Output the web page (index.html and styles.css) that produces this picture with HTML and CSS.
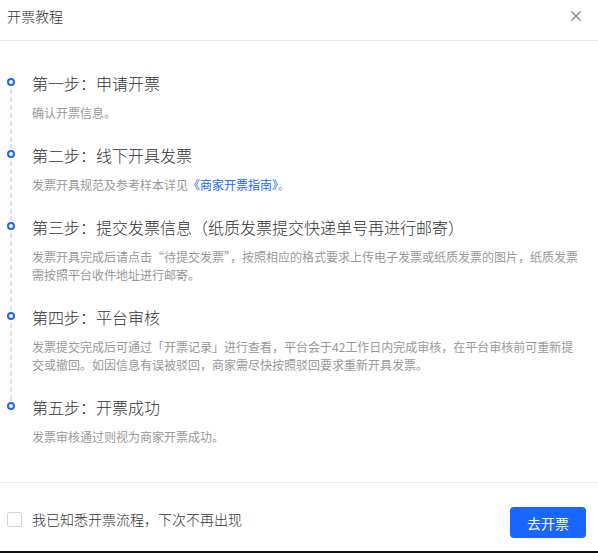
FILE: index.html
```html
<!DOCTYPE html>
<html lang="zh-CN">
<head>
    <meta charset="UTF-8">
    <meta name="viewport" content="width=device-width, initial-scale=1.0">
    <title>开票教程</title>
    <link rel="stylesheet" href="styles.css">
</head>
<body>
    <div class="dialog">
        <div class="dialog-header">
            <span class="dialog-title">开票教程</span>
            <span class="close-btn">
                <svg width="10" height="10" viewBox="0 0 10 10">
                    <path d="M0.5 0.5 L9.5 9.5 M9.5 0.5 L0.5 9.5" stroke="#888" stroke-width="1.3" fill="none"/>
                </svg>
            </span>
        </div>

        <div class="dialog-body">
            <div class="step first">
                <div class="rail">
                    <div class="rail-top"></div>
                    <div class="dot"></div>
                    <div class="rail-line"></div>
                </div>
                <div class="step-content">
                    <div class="step-title">第一步：申请开票</div>
                    <div class="step-desc">确认开票信息。</div>
                </div>
            </div>

            <div class="step">
                <div class="rail">
                    <div class="rail-top"></div>
                    <div class="dot"></div>
                    <div class="rail-line"></div>
                </div>
                <div class="step-content">
                    <div class="step-title">第二步：线下开具发票</div>
                    <div class="step-desc">发票开具规范及参考样本详见<a class="link">《商家开票指南》</a>。</div>
                </div>
            </div>

            <div class="step">
                <div class="rail">
                    <div class="rail-top"></div>
                    <div class="dot"></div>
                    <div class="rail-line"></div>
                </div>
                <div class="step-content">
                    <div class="step-title">第三步：提交发票信息（纸质发票提交快递单号再进行邮寄）</div>
                    <div class="step-desc">发票开具完成后请点击“待提交发票”，按照相应的格式要求上传电子发票或纸质发票的图片，纸质发票需按照平台收件地址进行邮寄。</div>
                </div>
            </div>

            <div class="step">
                <div class="rail">
                    <div class="rail-top"></div>
                    <div class="dot"></div>
                    <div class="rail-line"></div>
                </div>
                <div class="step-content">
                    <div class="step-title">第四步：平台审核</div>
                    <div class="step-desc">发票提交完成后可通过「开票记录」进行查看，平台会于42工作日内完成审核，在平台审核前可重新提交或撤回。如因信息有误被驳回，商家需尽快按照驳回要求重新开具发票。</div>
                </div>
            </div>

            <div class="step last">
                <div class="rail">
                    <div class="rail-top"></div>
                    <div class="dot"></div>
                </div>
                <div class="step-content">
                    <div class="step-title">第五步：开票成功</div>
                    <div class="step-desc">发票审核通过则视为商家开票成功。</div>
                </div>
            </div>
        </div>

        <div class="dialog-footer">
            <label class="remember">
                <span class="checkbox"></span>
                <span>我已知悉开票流程，下次不再出现</span>
            </label>
            <button class="primary-btn">去开票</button>
        </div>
    </div>
</body>
</html>
```

FILE: styles.css
```css
* {
    margin: 0;
    padding: 0;
    box-sizing: border-box;
    font-family: "Noto Sans CJK SC", "Liberation Sans", sans-serif;
}

body {
    background: #fff;
    color: #333;
}

.dialog {
    width: 598px;
    height: 553px;
    background: #fff;
    border-bottom: 2px solid #111;
    display: flex;
    flex-direction: column;
}

.dialog-header {
    height: 41px;
    padding: 5px 17px 0 7px;
    border-bottom: 1px solid #ebebeb;
    display: flex;
    justify-content: space-between;
    align-items: flex-start;
}

.dialog-title {
    font-size: 14px;
    line-height: 22px;
    font-weight: 300;
    color: #333;
}

.close-btn {
    display: flex;
    align-items: center;
    height: 22px;
}

.dialog-body {
    padding: 31px 14px 14px 7px;
}

.step {
    display: grid;
    grid-template-columns: 25px 1fr;
}

.rail {
    display: flex;
    flex-direction: column;
    width: 8px;
}

.rail-top {
    height: 6px;
    width: 2px;
    margin-left: 3px;
    background: repeating-linear-gradient(to bottom, #d6e3ff 0 5px, transparent 5px 9px);
}

.first .rail-top {
    background: none;
}

.dot {
    width: 8px;
    height: 8px;
    border: 2px solid #1966ff;
    border-radius: 50%;
    background: #fff;
}

.rail-line {
    flex: 1;
    width: 2px;
    margin-left: 3px;
    background: repeating-linear-gradient(to bottom, transparent 0 3px, #d6e3ff 3px 8px);
}

.step-content {
    padding-bottom: 22px;
}

.step-title {
    font-size: 16px;
    line-height: 22px;
    font-weight: 300;
    color: #333;
}

.step-desc {
    margin-top: 10px;
    font-size: 12px;
    line-height: 18px;
    color: #999;
}

.link {
    color: #1966ff;
    cursor: pointer;
}

.dialog-footer {
    flex: 1;
    border-top: 1px solid #ebebeb;
    padding: 24px 12px 0 7px;
    display: flex;
    justify-content: space-between;
    align-items: flex-start;
}

.remember {
    margin-top: 1px;
    display: flex;
    align-items: center;
    gap: 10px;
    font-size: 14px;
    line-height: 22px;
    font-weight: 300;
    color: #333;
}

.checkbox {
    width: 15px;
    height: 15px;
    border: 1px solid #d4d4d4;
    border-radius: 2px;
    background: #fff;
}

.primary-btn {
    width: 76px;
    height: 31px;
    border: none;
    border-radius: 4px;
    background: #1966ff;
    color: #fff;
    font-size: 14px;
    cursor: pointer;
}
```
